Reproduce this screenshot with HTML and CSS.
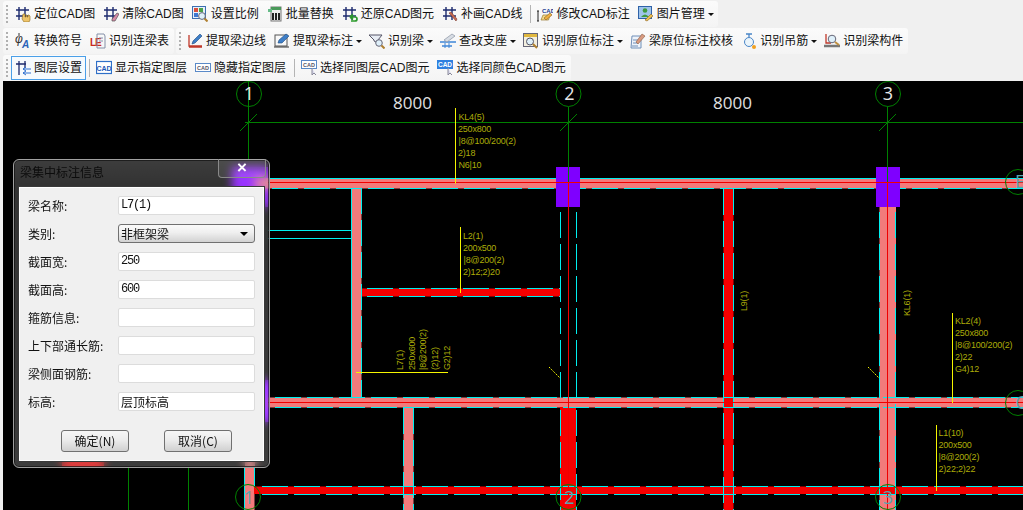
FILE: index.html
```html
<!DOCTYPE html>
<html lang="zh-CN">
<head>
<meta charset="utf-8">
<title>梁集中标注信息</title>
<link rel="stylesheet" href="styles.css">
</head>
<body>
<svg class="defs" width="0" height="0">
  <defs>
    <g id="grid" fill="none" stroke="#1c2a6e" stroke-width="1.4"><path d="M4 1v13M10 1v13M1 4h13M1 10h13"/></g>
    <g id="ic-locate"><use href="#grid"/><path d="M8 8h2v3h1V9h1v2h1V9h1l1 1v4l-1 2H9l-2-3z" fill="#eec46a" stroke="#8a6a20" stroke-width=".6"/></g>
    <g id="ic-clear"><use href="#grid"/><path d="M9 13l5-6 2 1-4 7H9z" fill="#d88aa8" stroke="#555" stroke-width=".7"/></g>
    <g id="ic-scale"><rect x=".5" y=".5" width="13" height="12" fill="#e8f0fa" stroke="#3c6fb0"/><rect x="2" y="2" width="4" height="4" fill="#d94f3c"/><rect x="7" y="2" width="4" height="4" fill="#4aa04a"/><rect x="2" y="7" width="4" height="4" fill="#3f78d0"/><circle cx="10" cy="10" r="3.4" fill="#dff0fa" stroke="#667"/><path d="M12.5 12.5l3 3" stroke="#b08030" stroke-width="2"/></g>
    <g id="ic-batch"><rect x="4" y="1" width="10" height="14" fill="#eee" stroke="#777"/><rect x="4" y="1" width="10" height="3" fill="#4a9a5a"/><rect x="1" y="3" width="4" height="3" fill="#6b8"/><path d="M6 7v7M9 7v7M12 7v7" stroke="#222" stroke-width="2"/></g>
    <g id="ic-restore"><use href="#grid"/><path d="M8 11h5q2 0 2 2t-2 2H9M8 11l3-2.5M8 11l3 2.5" fill="none" stroke="#2c9a2c" stroke-width="1.7"/></g>
    <g id="ic-draw"><use href="#grid"/><path d="M7 7l2-1 6 7-1 2z" fill="#c96a50" stroke="#7a3a30" stroke-width=".6"/></g>
    <g id="ic-edit"><text x="5" y="6.5" class="ict ict-navy">CAD</text><path d="M1 5v10M0 5h2M0 15h2" stroke="#222"/><path d="M4 14l2-5h7l-1.500 5z" fill="#f3d98a" stroke="#9a7a30" stroke-width=".7"/><path d="M7 12l6-5 2 2-6 5z" fill="#efb040" stroke="#8a6020" stroke-width=".6"/></g>
    <g id="ic-img"><rect x=".5" y=".5" width="13" height="12" fill="#9fc4ea" stroke="#2f62a8"/><circle cx="7" cy="4.500" r="2.300" fill="#3f9a3f"/><path d="M3 11q4-5 8 0z" fill="#3f9a3f"/><path d="M7 14l6-6 2 2-6 5z" fill="#efc050" stroke="#8a6020" stroke-width=".6"/></g>
    <g id="ic-sym"><text x="0" y="10" class="ict ict-phi">φ</text><text x="7" y="15" class="ict ict-a">A</text><path d="M4 0v3" stroke="#333"/></g>
    <g id="ic-table"><text x="0" y="13" class="ict ict-le">LE</text><path d="M7 1h7l1 2v12H7z" fill="none" stroke="#8490a8"/><path d="M9 5h4M9 8h4" stroke="#8490a8"/></g>
    <g id="ic-edge"><path d="M2 2v11h13M2 14h13" fill="none" stroke="#c0392b" stroke-width="1.300"/><path d="M5 11l1-3 7-7 2 2-7 7z" fill="#3e7fc8" stroke="#1c4a80" stroke-width=".6"/></g>
    <g id="ic-mark"><rect x="1" y="2" width="12" height="11" fill="none" stroke="#555"/><path d="M0 14h15" stroke="#333"/><path d="M4 10l1-3 7-6 3 2-7 7z" fill="#3e7fc8" stroke="#1c4a80" stroke-width=".6"/></g>
    <g id="ic-beam"><path d="M0 2h13l-4 5v3L5 8V7z" fill="#e8edf4" stroke="#556"/><circle cx="10" cy="10" r="3.300" fill="#dff0fa" stroke="#667"/><path d="M12.500 12.500l3 3" stroke="#b08030" stroke-width="2"/></g>
    <g id="ic-seat"><path d="M0 9h16M2 13h10" stroke="#3f86d8" stroke-width="1.300"/><path d="M5 10v5M9 10v5" stroke="#3f86d8"/><path d="M4 7l8-6 3 2-8 6z" fill="#d8dde4" stroke="#8a94a4" stroke-width=".7"/></g>
    <g id="ic-orig"><rect x=".5" y=".5" width="14" height="13" fill="#f3efe0" stroke="#667"/><rect x="1" y="1" width="13" height="3" fill="#e0b840"/><circle cx="7" cy="8.500" r="3.500" fill="#dff0fa" stroke="#556"/><path d="M10 11l4 4" stroke="#b08030" stroke-width="2"/></g>
    <g id="ic-check"><path d="M2 3h9v12H1z" fill="#eef3fa" stroke="#6f8fb8"/><path d="M3 7h6M3 10h5M2 13h6" stroke="#6f8fb8"/><path d="M6 9l6-8 3 2-7 8z" fill="#d89a80" stroke="#8a5a40" stroke-width=".6"/></g>
    <g id="ic-hang"><path d="M5 1h6M8 1v3" stroke="#4a86c8" stroke-width="1.300"/><circle cx="8" cy="9" r="4.500" fill="#eaf4fa" stroke="#4a86c8"/><circle cx="13" cy="14" r="2" fill="#f0a020"/></g>
    <g id="ic-part"><path d="M2 1v9h5" fill="none" stroke="#c0392b" stroke-width="1.300"/><path d="M0 13h16" stroke="#777" stroke-width="2.500"/><circle cx="8" cy="6" r="3.800" fill="#dff0fa" stroke="#667"/><path d="M11 9l4 3" stroke="#c09040" stroke-width="2"/></g>
    <g id="ic-layer"><path d="M4 1v14M10 1v7M1 4h10" fill="none" stroke="#1c2a6e" stroke-width="1.300"/><path d="M16 9H8M16 13H8M8 9l3-2M8 9l3 2M8 13l3-2M8 13l3 2" fill="none" stroke="#2f70d0"/></g>
    <g id="ic-show"><rect x=".5" y="1.500" width="15" height="12" fill="#fff" stroke="#2f70c8" stroke-width="1.200"/><text x="8" y="10.500" class="ict ict-cad">CAD</text></g>
    <g id="ic-hide"><rect x=".5" y="3.500" width="15" height="8" fill="#fff" stroke="#5a8ac8"/><text x="8" y="9.500" class="ict ict-cads">CAD</text></g>
    <g id="ic-same"><rect x=".5" y=".5" width="15" height="8" fill="#fff" stroke="#5a8ac8"/><text x="8" y="6.800" class="ict ict-cads">CAD</text><path d="M11 8v7l2-2 2 2" fill="#dde" stroke="#889"/></g>
    <g id="ic-color"><rect y="0" width="16" height="9" fill="#2f80e0"/><text x="8" y="7" class="ict ict-cadw">CAD</text><path d="M11 8v7l2-2 2 2" fill="#dde" stroke="#889"/></g>
  </defs>
</svg>

<div class="rows">
  <div class="row">
    <div class="tb">
      <i class="grip"></i>
      <div class="btn"><svg class="ic" viewBox="0 0 16 16"><use href="#ic-locate"/></svg><span>定位CAD图</span></div>
      <div class="btn"><svg class="ic" viewBox="0 0 16 16"><use href="#ic-clear"/></svg><span>清除CAD图</span></div>
      <div class="btn"><svg class="ic" viewBox="0 0 16 16"><use href="#ic-scale"/></svg><span>设置比例</span></div>
      <div class="btn"><svg class="ic" viewBox="0 0 16 16"><use href="#ic-batch"/></svg><span>批量替换</span></div>
      <div class="btn"><svg class="ic" viewBox="0 0 16 16"><use href="#ic-restore"/></svg><span>还原CAD图元</span></div>
      <div class="btn"><svg class="ic" viewBox="0 0 16 16"><use href="#ic-draw"/></svg><span>补画CAD线</span></div>
      <i class="sep"></i>
      <div class="btn"><svg class="ic" viewBox="0 0 16 16"><use href="#ic-edit"/></svg><span>修改CAD标注</span></div>
      <div class="btn"><svg class="ic" viewBox="0 0 16 16"><use href="#ic-img"/></svg><span>图片管理</span><i class="caret"></i></div>
    </div>
  </div>
  <div class="row">
    <div class="tb">
      <i class="grip"></i>
      <div class="btn"><svg class="ic" viewBox="0 0 16 16"><use href="#ic-sym"/></svg><span>转换符号</span></div>
      <div class="btn"><svg class="ic" viewBox="0 0 16 16"><use href="#ic-table"/></svg><span>识别连梁表</span></div>
    </div>
    <div class="tb tb-next">
      <i class="grip"></i>
      <div class="btn"><svg class="ic" viewBox="0 0 16 16"><use href="#ic-edge"/></svg><span>提取梁边线</span></div>
      <div class="btn"><svg class="ic" viewBox="0 0 16 16"><use href="#ic-mark"/></svg><span>提取梁标注</span><i class="caret"></i></div>
      <div class="btn"><svg class="ic" viewBox="0 0 16 16"><use href="#ic-beam"/></svg><span>识别梁</span><i class="caret"></i></div>
      <div class="btn"><svg class="ic" viewBox="0 0 16 16"><use href="#ic-seat"/></svg><span>查改支座</span><i class="caret"></i></div>
      <div class="btn"><svg class="ic" viewBox="0 0 16 16"><use href="#ic-orig"/></svg><span>识别原位标注</span><i class="caret"></i></div>
      <div class="btn"><svg class="ic" viewBox="0 0 16 16"><use href="#ic-check"/></svg><span>梁原位标注校核</span></div>
      <div class="btn"><svg class="ic" viewBox="0 0 16 16"><use href="#ic-hang"/></svg><span>识别吊筋</span><i class="caret"></i></div>
      <div class="btn"><svg class="ic" viewBox="0 0 16 16"><use href="#ic-part"/></svg><span>识别梁构件</span></div>
    </div>
  </div>
  <div class="row">
    <div class="tb">
      <i class="grip grip-tight"></i>
      <div class="btn btn-on"><svg class="ic" viewBox="0 0 16 16"><use href="#ic-layer"/></svg><span>图层设置</span></div>
      <i class="sep sep-tight"></i>
      <div class="btn"><svg class="ic" viewBox="0 0 16 16"><use href="#ic-show"/></svg><span>显示指定图层</span></div>
      <div class="btn"><svg class="ic" viewBox="0 0 16 16"><use href="#ic-hide"/></svg><span>隐藏指定图层</span></div>
      <i class="sep"></i>
      <div class="btn"><svg class="ic" viewBox="0 0 16 16"><use href="#ic-same"/></svg><span>选择同图层CAD图元</span></div>
      <div class="btn"><svg class="ic" viewBox="0 0 16 16"><use href="#ic-color"/></svg><span>选择同颜色CAD图元</span></div>
    </div>
  </div>
</div>

<main class="canvas">
  <svg class="drawing" viewBox="3 81 1020 429" width="1020" height="429">
    <!-- hidden structure on axis 1, seen blurred through the dialog glass -->
    <rect x="232" y="167" width="36" height="40" fill="#7f00ff"/>
    <rect x="238" y="380" width="32" height="42" fill="#7f00ff"/>
    <rect x="62" y="456" width="42" height="10" fill="#f00"/>
    <rect x="245" y="440" width="10" height="26" fill="#f27b7b"/>

    <!-- beams, fill -->
    <rect x="255" y="178" width="768" height="10.500" fill="#f27b7b"/>
    <rect x="268" y="397.500" width="755" height="10" fill="#f27b7b"/>
    <rect x="351.500" y="188" width="10" height="210" fill="#f27b7b"/>
    <rect x="403.500" y="407" width="10" height="103" fill="#f27b7b"/>
    <rect x="879.500" y="207" width="16.500" height="303" fill="#f27b7b"/>
    <rect x="245" y="468" width="9.500" height="42" fill="#f27b7b"/>
    <rect x="361" y="288.500" width="199" height="8" fill="#f60000"/>
    <rect x="723.500" y="188" width="10" height="322" fill="#f60000"/>
    <rect x="560" y="407" width="16" height="103" fill="#f60000"/>
    <rect x="254" y="486.500" width="769" height="7.500" fill="#f60000"/>
    <rect x="403.500" y="486.500" width="10" height="7.500" fill="#f60000"/>

    <!-- beam edges -->
    <g class="cy">
      <path d="M268 178.500H1023"/>
      <path d="M268 230.500H351.500M268 238.500H351.500"/>
      <path d="M351.500 188V397"/>
      <path d="M244.500 468V510M254.500 468V486"/>
    </g>
    <g class="cy dash">
      <path d="M272 188.500H1023"/>
      <path d="M361.500 188V397"/>
      <path d="M367 288.500H560M367 296.500H560"/>
      <path d="M560.500 212V398M576.500 212V398"/>
      <path d="M275 397.500H1023M275 407.500H1023"/>
      <path d="M403.500 408V510M413.500 408V510"/>
      <path d="M560.500 410V510M576.500 410V510"/>
      <path d="M723.500 189V510M733.500 189V510"/>
      <path d="M879.500 212V510M895.500 212V510"/>
      <path d="M262 486.500H1023M262 494.500H1023"/>
    </g>

    <!-- columns -->
    <rect x="556" y="167" width="24" height="40" fill="#7f00ff"/>
    <rect x="876" y="167" width="24" height="40" fill="#7f00ff"/>

    <!-- centre lines -->
    <path class="rd" d="M268 182.500H1023M568.500 182V510M887.500 182V510M268 402.500H1023"/>

    <!-- axes and dimension line -->
    <g class="gr">
      <path d="M245 122.500H1023"/>
      <path d="M248.500 81V160M568.500 107V182M887.500 107V182"/>
      <path d="M240 131l17-17M560 131l17-17M879 131l17-17"/>
      <path d="M128.500 468V510M188.500 468V510"/>
      <circle cx="249" cy="94" r="12.500"/>
      <circle cx="568.500" cy="94" r="12.500"/>
      <circle cx="888" cy="94" r="12.500"/>
      <circle cx="248" cy="497" r="12.500"/>
      <circle cx="568.500" cy="497" r="12.500"/>
      <circle cx="888" cy="497" r="12.500"/>
      <circle cx="1018" cy="182" r="12.500"/>
      <circle cx="1018" cy="403" r="12.500"/>
    </g>
    <text x="393" y="109" class="dim">8000</text>
    <text x="713" y="109" class="dim">8000</text>
    <text x="249" y="100" class="axis">1</text>
    <text x="569.500" y="100" class="axis">2</text>
    <text x="888" y="100" class="axis">3</text>
    <text x="249" y="504" class="axis axis-dim">1</text>
    <text x="569.500" y="504" class="axis axis-dim">2</text>
    <text x="888" y="504" class="axis axis-dim">3</text>
    <text x="1020" y="188" class="axis axis-dim">E</text>
    <text x="1021" y="409" class="axis axis-dim">C</text>

    <!-- leaders -->
    <path class="yl" d="M455.500 108V183.500M460.500 227V293M356 372.500H448M952.500 313V403M936.500 425V491"/>
    <path class="yl yl-dot" d="M549 367l11 11M868 367l11 11"/>

    <!-- annotation text -->
    <g class="note">
      <text x="458.500" y="120">KL4(5)</text>
      <text x="458" y="132">250x800</text>
      <text x="458.500" y="144">|8@100/200(2)</text>
      <text x="458" y="156">2)18</text>
      <text x="458.500" y="168">N6|10</text>
      <text x="463" y="239">L2(1)</text>
      <text x="463" y="251">200x500</text>
      <text x="463.500" y="263">|8@200(2)</text>
      <text x="463" y="275">2)12;2)20</text>
      <text x="955" y="324">KL2(4)</text>
      <text x="955" y="336">250x800</text>
      <text x="955" y="348">|8@100/200(2)</text>
      <text x="955" y="360">2)22</text>
      <text x="955" y="372">G4)12</text>
      <text x="938.500" y="436">L1(10)</text>
      <text x="938.500" y="448">200x500</text>
      <text x="938.500" y="460">|8@200(2)</text>
      <text x="938.500" y="472">2)22;2)22</text>
      <text transform="translate(403 370) rotate(-90)">L7(1)</text>
      <text transform="translate(414.500 370) rotate(-90)">250x600</text>
      <text transform="translate(426 370) rotate(-90)">|8@200(2)</text>
      <text transform="translate(438 370) rotate(-90)">(2)12)</text>
      <text transform="translate(450 370) rotate(-90)">G2)12</text>
      <text transform="translate(747 311) rotate(-90)">L9(1)</text>
      <text transform="translate(910 316) rotate(-90)">KL6(1)</text>
    </g>
  </svg>

  <section class="dialog">
    <header class="dlg-title">
      <h1>梁集中标注信息</h1>
      <div class="dlg-close">×</div>
    </header>
    <div class="panel">
      <div class="field"><label>梁名称:</label><div class="val val-latin">L7(1)</div></div>
      <div class="field"><label>类别:</label><div class="val val-select"><span>非框架梁</span><i class="sel-caret"></i></div></div>
      <div class="field"><label>截面宽:</label><div class="val val-latin">250</div></div>
      <div class="field"><label>截面高:</label><div class="val val-latin">600</div></div>
      <div class="field"><label>箍筋信息:</label><div class="val"></div></div>
      <div class="field"><label>上下部通长筋:</label><div class="val"></div></div>
      <div class="field"><label>梁侧面钢筋:</label><div class="val"></div></div>
      <div class="field"><label>标高:</label><div class="val">层顶标高</div></div>
      <div class="actions">
        <div class="pbtn">确定(N)</div>
        <div class="pbtn">取消(C)</div>
      </div>
    </div>
  </section>
</main>
</body>
</html>
```
FILE: styles.css
```css
* { box-sizing: border-box; }
html, body { margin: 0; height: 510px; overflow: hidden; }
body {
  background: #f0f0f0;
  font: 12px/16px "Liberation Sans", "Noto Sans CJK SC", sans-serif;
  color: #111;
}
.defs { position: absolute; }
.rows { height: 81px; display: flex; flex-direction: column; }
.row { height: 27px; display: flex; padding: 1px 0 0 3px; gap: 2px; }
.tb {
  height: 26px;
  display: flex;
  align-items: center;
  gap: 8px;
  padding: 0 5px 0 3px;
  background: linear-gradient(#fbfbfb, #f4f4f4);
  border-radius: 3px;
}
.tb-next { padding-left: 3px; }
.grip {
  width: 2px;
  height: 18px;
  margin-right: -1px;
  background: repeating-linear-gradient(#b0b0b0 0 2px, transparent 2px 4px);
}
.tb-next .grip { margin-right: -2px; }
.grip-tight { margin-right: -5px; }
.btn { display: flex; align-items: center; gap: 3px; white-space: nowrap; }
.btn-on {
  height: 24px;
  padding: 0 3px;
  border: 1px solid #4a9fe8;
  background: #f6fafd;
}
.ic { width: 16px; height: 16px; flex: none; }
.caret {
  width: 0;
  height: 0;
  margin-right: -1px;
  border: 3px solid transparent;
  border-top: 3px solid #111;
  border-bottom: 0;
}
.sep { width: 1px; height: 18px; background: #b4b4b4; margin-right: -2px; }
.sep-tight { margin-left: -5px; }

.ict { font-family: "Liberation Sans", sans-serif; font-weight: 700; }
.ict-navy { font-size: 6px; fill: #1c3a90; }
.ict-phi { font-size: 12px; font-weight: 400; fill: #333; font-style: italic; }
.ict-a { font-size: 10px; fill: #2a62b8; font-style: italic; }
.ict-le { font-size: 10px; fill: #c8281e; letter-spacing: -1px; }
.ict-cad { font-size: 7px; fill: #1c5ab8; text-anchor: middle; }
.ict-cads { font-size: 5.500px; fill: #556; text-anchor: middle; }
.ict-cadw { font-size: 6.500px; fill: #fff; text-anchor: middle; }

.canvas {
  position: relative;
  height: 429px;
  margin-left: 3px;
  background: #000;
  overflow: hidden;
}
.drawing { display: block; }
.drawing path, .drawing circle { fill: none; }
.cy path { stroke: #00f0f0; stroke-width: 1; }
.dash path { stroke-dasharray: 26 6; }
.rd { stroke: #f00000; stroke-width: 1; }
.gr path, .gr circle { stroke: #008000; stroke-width: 1; }
.yl { stroke: #f5f500; stroke-width: 1; }
.yl-dot { stroke-dasharray: 1.500 1; }
.dim { font: 17px "Open Sans", sans-serif; fill: #e0e0e0; }
.axis { font: 18px "Open Sans", sans-serif; fill: #e8e8e8; text-anchor: middle; }
.axis-dim { fill: #5aa4ac; }
.note text { font: 9px "Liberation Sans", sans-serif; letter-spacing: -.2px; fill: #acac08; }

.dialog {
  position: absolute;
  left: 10px;
  top: 78px;
  width: 257px;
  height: 309px;
  padding: 0 5px 6px 5px;
  display: flex;
  flex-direction: column;
  border: 1px solid #a0a0a0;
  border-radius: 6px;
  background: linear-gradient(rgba(255,255,255,.24), rgba(255,255,255,.2) 8%, rgba(255,255,255,.24));
  backdrop-filter: blur(5px);
  box-shadow: inset 0 0 0 1px rgba(0,0,0,.5);
}
.dlg-title { height: 27px; flex: none; position: relative; }
.dlg-title h1 {
  margin: 0;
  padding: 5px 0 0 1px;
  font-size: 12px;
  font-weight: 400;
  line-height: 16px;
  color: #0c0c0c;
}
.dlg-close {
  position: absolute;
  right: -2px;
  top: -1px;
  width: 48px;
  height: 19px;
  border: 1px solid #8a8a8a;
  border-top: 0;
  border-radius: 0 0 4px 4px;
  background: rgba(255,255,255,.08);
  color: #fff;
  font: 700 17px/17px "Liberation Sans", sans-serif;
  text-align: center;
}
.panel {
  flex: 1;
  display: flex;
  flex-direction: column;
  gap: 9px;
  padding: 8px 8px 0 8px;
  background: #f0f0f0;
  border: 1px solid #fff;
  outline: 1px solid #3a3a3a;
  color: #111;
  font-family: "Noto Sans CJK SC", sans-serif;
}
.field {
  height: 19px;
  display: flex;
  align-items: center;
  justify-content: space-between;
  line-height: 19px;
}
.val {
  width: 137px;
  height: 19px;
  padding: 0 2px;
  background: #fff;
  border: 1px solid #dcdcdc;
  border-radius: 2px;
  line-height: 17px;
  white-space: nowrap;
}
.val-latin { font: 12px/17px "Liberation Mono", monospace; letter-spacing: -1.200px; }
.val-select {
  display: flex;
  align-items: center;
  justify-content: space-between;
  padding-right: 6px;
  background: linear-gradient(#fafafa, #efefef 45%, #d2d2d2);
  border: 1px solid #707070;
  border-radius: 3px;
}
.sel-caret {
  width: 0;
  height: 0;
  border: 4px solid transparent;
  border-top: 4px solid #000;
  border-bottom: 0;
}
.actions {
  display: flex;
  gap: 35px;
  margin-top: 10px;
  padding-left: 33px;
}
.pbtn {
  width: 68px;
  height: 22px;
  border: 1px solid #707070;
  border-radius: 3px;
  background: linear-gradient(#f6f6f6, #ececec 45%, #d0d0d0);
  text-align: center;
  line-height: 20px;
}
```
